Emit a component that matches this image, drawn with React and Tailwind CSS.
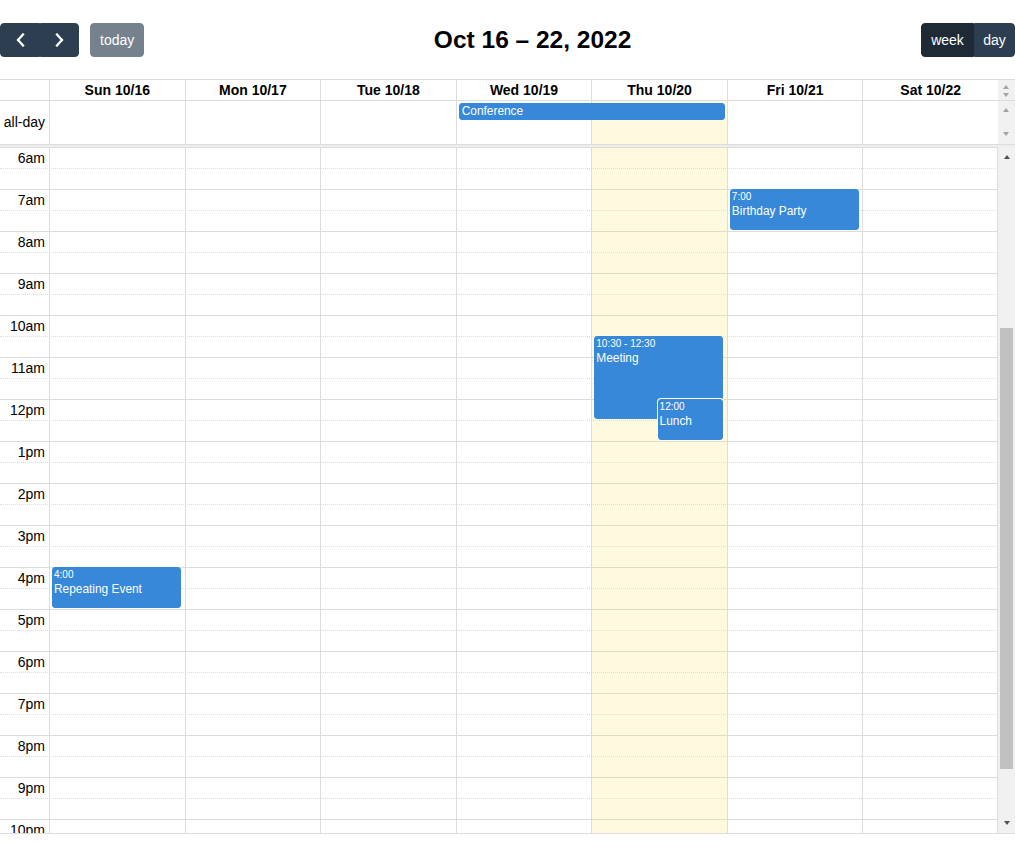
import React from 'react'

const days = ['Sun 10/16', 'Mon 10/17', 'Tue 10/18', 'Wed 10/19', 'Thu 10/20', 'Fri 10/21', 'Sat 10/22']
const TODAY = 4
const HOUR = 42
const FIRST = 6

const hours = ['6am', '7am', '8am', '9am', '10am', '11am', '12pm', '1pm', '2pm', '3pm', '4pm', '5pm', '6pm', '7pm', '8pm', '9pm', '10pm']

const events = [
  { day: 5, start: 7, end: 8, time: '7:00', title: 'Birthday Party' },
  { day: 4, start: 10.5, end: 12.5, time: '10:30 - 12:30', title: 'Meeting' },
  { day: 4, start: 12, end: 13, time: '12:00', title: 'Lunch', inset: true },
  { day: 0, start: 16, end: 17, time: '4:00', title: 'Repeating Event' },
]

const Chevron = ({ dir }) => (
  <svg width="9" height="14" viewBox="0 0 9 14" fill="none">
    <path
      d={dir === 'left' ? 'M7 1.5 L2 7 L7 12.5' : 'M2 1.5 L7 7 L2 12.5'}
      stroke="white"
      strokeWidth="2.3"
      strokeLinecap="square"
    />
  </svg>
)

const Up = ({ dark }) => (
  <div className={`w-0 h-0 border-x-[3.5px] border-x-transparent border-b-[4px] ${dark ? 'border-b-[#505050]' : 'border-b-[#a3a3a3]'}`} />
)
const Down = ({ dark }) => (
  <div className={`w-0 h-0 border-x-[3.5px] border-x-transparent border-t-[4px] ${dark ? 'border-t-[#505050]' : 'border-t-[#a3a3a3]'}`} />
)

const Toolbar = () => (
  <div className="flex items-center justify-between h-[34px] mb-[22px]">
    <div className="flex items-center">
      <div className="flex">
        <button className="h-[34px] w-[40px] flex items-center justify-center bg-[#2c3e50] border border-[#2c3e50] rounded-l-[4px]">
          <Chevron dir="left" />
        </button>
        <button className="h-[34px] w-[39px] flex items-center justify-center bg-[#2c3e50] border border-[#2c3e50] rounded-r-[4px]">
          <Chevron dir="right" />
        </button>
      </div>
      <button className="ml-[11px] h-[34px] px-[9px] bg-[#2c3e50] border border-[#2c3e50] rounded-[4px] text-white text-[14px] opacity-65">
        today
      </button>
    </div>
    <h2 className="text-[24.5px] font-bold leading-none">Oct 16 – 22, 2022</h2>
    <div className="flex">
      <button className="h-[34px] w-[53px] bg-[#1e2b37] border border-[#1e2b37] rounded-l-[4px] text-white text-[14px]">week</button>
      <button className="h-[34px] w-[41px] bg-[#2c3e50] border border-[#2c3e50] rounded-r-[4px] text-white text-[14px]">day</button>
    </div>
  </div>
)

const TimedEvent = ({ ev }) => (
  <div
    className={`absolute rounded-[3px] border border-[#3788d8] bg-[#3788d8] text-white overflow-hidden px-[1px] pt-[1px] ${
      ev.inset ? 'left-[49%] right-0 shadow-[0_0_0_1px_white]' : 'left-0 right-0'
    }`}
    style={{ top: (ev.start - FIRST) * HOUR, height: (ev.end - ev.start) * HOUR - 1 }}
  >
    <div className="text-[10px] leading-[12px] mb-[1px] whitespace-nowrap">{ev.time}</div>
    <div className="text-[11.9px] leading-[14px]">{ev.title}</div>
  </div>
)

export default function App() {
  return (
    <div className="min-h-screen bg-white text-black text-[14px] font-['Liberation_Sans',Arial,sans-serif] pt-[23px]">
      <Toolbar />

      <div className="border-t border-b border-[#ddd]">
        {/* header */}
        <div className="grid grid-cols-[49px_repeat(7,minmax(0,1fr))_17px] h-[21px] border-b border-[#ddd]">
          <div />
          {days.map(d => (
            <div key={d} className="border-l border-[#ddd] text-center font-bold leading-[20px] last-of-type:border-r">
              {d}
            </div>
          ))}
          <div className="bg-[#f1f1f1] flex flex-col items-center justify-between pt-[5px] pb-[3px]">
            <Up />
            <Down />
          </div>
        </div>

        {/* all-day */}
        <div className="relative grid grid-cols-[49px_repeat(7,minmax(0,1fr))_17px] h-[44px] border-b border-[#ddd]">
          <div className="flex items-center justify-end pr-[4px]">all-day</div>
          {days.map((d, i) => (
            <div key={d} className={`border-l border-[#ddd] ${i === TODAY ? 'bg-[rgba(255,220,40,0.15)]' : ''}`} />
          ))}
          <div className="bg-[#f1f1f1] flex flex-col items-center justify-between pt-[7px] pb-[8px]">
            <Up />
            <Down />
          </div>
          <div className="absolute inset-0 grid grid-cols-[49px_repeat(7,minmax(0,1fr))_17px] pointer-events-none">
            <div className="col-start-5 col-span-2 ml-[3px] mr-[2px] mt-[2px] h-[17px] rounded-[3px] border border-[#3788d8] bg-[#3788d8] text-white text-[11.9px] leading-[15px] pl-[2px]">
              Conference
            </div>
          </div>
        </div>

        {/* divider */}
        <div className="h-[2px] bg-[#eee]" />

        {/* body */}
        <div className="flex h-[686px]">
          <div className="relative flex-1 overflow-hidden">
            {hours.map(h => (
              <React.Fragment key={h}>
                <div className="flex h-[21px] border-t border-[#ddd]">
                  <div className="w-[49px] text-right pr-[4px] leading-[20px] whitespace-nowrap">{h}</div>
                </div>
                <div className="h-[21px] border-t border-dotted border-[#ddd]" />
              </React.Fragment>
            ))}
            <div className="absolute inset-0 grid grid-cols-[49px_repeat(7,minmax(0,1fr))]">
              <div />
              {days.map((d, i) => (
                <div key={d} className={`relative border-l border-[#ddd] last:border-r ${i === TODAY ? 'bg-[rgba(255,220,40,0.15)]' : ''}`}>
                  <div className="absolute top-0 bottom-0 left-[2px] right-[2.5%]">
                    {events.filter(e => e.day === i).map(ev => (
                      <TimedEvent key={ev.title} ev={ev} />
                    ))}
                  </div>
                </div>
              ))}
            </div>
          </div>
          <div className="relative w-[17px] bg-[#f1f1f1]">
            <div className="absolute top-[8px] left-0 right-0 flex justify-center">
              <Up dark />
            </div>
            <div className="absolute top-[181px] h-[441px] left-[2px] right-[2px] bg-[#c1c1c1]" />
            <div className="absolute bottom-[8px] left-0 right-0 flex justify-center">
              <Down dark />
            </div>
          </div>
        </div>
      </div>
    </div>
  )
}
